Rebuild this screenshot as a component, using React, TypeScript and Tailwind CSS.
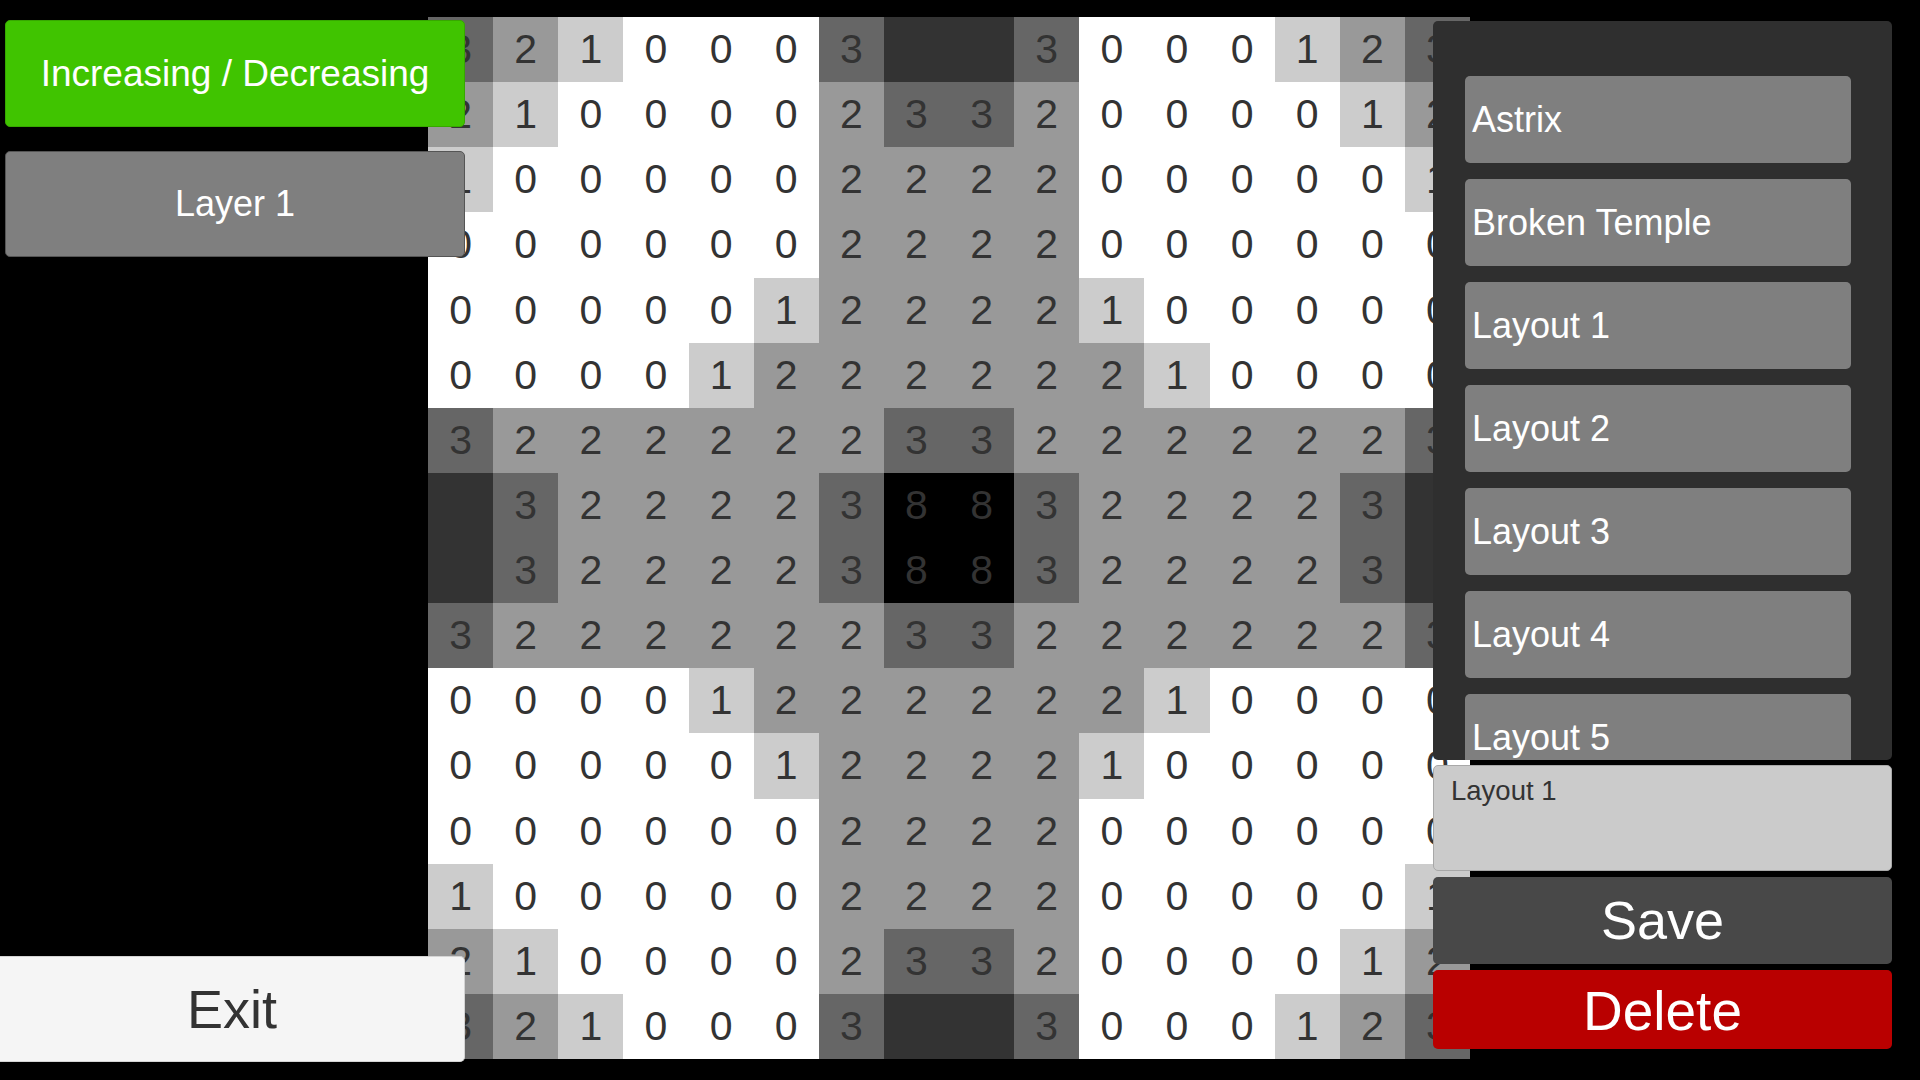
const board: number[][] = [
  [3, 2, 1, 0, 0, 0, 3, 4, 4, 3, 0, 0, 0, 1, 2, 3],
  [2, 1, 0, 0, 0, 0, 2, 3, 3, 2, 0, 0, 0, 0, 1, 2],
  [1, 0, 0, 0, 0, 0, 2, 2, 2, 2, 0, 0, 0, 0, 0, 1],
  [0, 0, 0, 0, 0, 0, 2, 2, 2, 2, 0, 0, 0, 0, 0, 0],
  [0, 0, 0, 0, 0, 1, 2, 2, 2, 2, 1, 0, 0, 0, 0, 0],
  [0, 0, 0, 0, 1, 2, 2, 2, 2, 2, 2, 1, 0, 0, 0, 0],
  [3, 2, 2, 2, 2, 2, 2, 3, 3, 2, 2, 2, 2, 2, 2, 3],
  [4, 3, 2, 2, 2, 2, 3, 8, 8, 3, 2, 2, 2, 2, 3, 4],
  [4, 3, 2, 2, 2, 2, 3, 8, 8, 3, 2, 2, 2, 2, 3, 4],
  [3, 2, 2, 2, 2, 2, 2, 3, 3, 2, 2, 2, 2, 2, 2, 3],
  [0, 0, 0, 0, 1, 2, 2, 2, 2, 2, 2, 1, 0, 0, 0, 0],
  [0, 0, 0, 0, 0, 1, 2, 2, 2, 2, 1, 0, 0, 0, 0, 0],
  [0, 0, 0, 0, 0, 0, 2, 2, 2, 2, 0, 0, 0, 0, 0, 0],
  [1, 0, 0, 0, 0, 0, 2, 2, 2, 2, 0, 0, 0, 0, 0, 1],
  [2, 1, 0, 0, 0, 0, 2, 3, 3, 2, 0, 0, 0, 0, 1, 2],
  [3, 2, 1, 0, 0, 0, 3, 4, 4, 3, 0, 0, 0, 1, 2, 3],
];

const shade: Record<number, string> = {
  0: 'bg-white',
  1: 'bg-[#cccccc]',
  2: 'bg-[#999999]',
  3: 'bg-[#666666]',
  4: 'bg-[#333333]',
  8: 'bg-black',
};

const layouts = ['Astrix', 'Broken Temple', 'Layout 1', 'Layout 2', 'Layout 3', 'Layout 4', 'Layout 5'];

function Board() {
  return (
    <div className="grid h-[1042px] w-[1042px] grid-cols-16 grid-rows-16">
      {board.flat().map((v, i) => (
        <div key={i} className={`flex items-center justify-center text-[41px] leading-none text-[#333333] ${shade[v]}`}>
          {v}
        </div>
      ))}
    </div>
  );
}

export default function App() {
  return (
    <div className="relative h-[1080px] w-[1920px] overflow-hidden bg-black font-['Liberation_Sans',Arial,sans-serif]">
      <div className="pl-[428px] pt-[17px]">
        <Board />
      </div>

      {/* left controls */}
      <div className="absolute bottom-[18px] left-0 top-[20px] flex w-[465px] flex-col justify-between">
        <div className="ml-[5px] flex flex-col gap-[24px]">
          <button className="h-[107px] rounded-[5px] border border-[#37a800] bg-[#40c400] text-[37px] text-white">
            Increasing / Decreasing
          </button>
          <button className="h-[106px] rounded-[5px] border border-[#555555] bg-[#7f7f7f] text-[36px] text-white">
            Layer 1
          </button>
        </div>
        <button className="h-[106px] rounded-r-[5px] border border-l-0 border-[#d4d4d4] bg-[#f5f5f5] text-[54px] text-[#333333]">
          Exit
        </button>
      </div>

      {/* right panel */}
      <div className="absolute left-[1433px] top-[21px] flex w-[459px] flex-col">
        <div className="flex h-[739px] flex-col gap-[16px] overflow-hidden rounded-[5px] bg-[#2f2f2f] pl-[32px] pr-[41px] pt-[55px]">
          {layouts.map((name) => (
            <div key={name} className="flex h-[87px] shrink-0 items-center rounded-[5px] bg-[#7f7f7f] pl-[7px] text-[36px] text-white">
              {name}
            </div>
          ))}
        </div>
        <div className="mt-[5px] h-[106px] rounded-[5px] border border-[#a8a8a8] bg-[#cbcbcb] pl-[17px] pt-[4px] text-[27.5px] text-[#333333]">
          Layout 1
        </div>
        <button className="mt-[6px] h-[87px] rounded-[5px] bg-[#484848] text-[54px] text-white">Save</button>
        <button className="mt-[6px] h-[79px] rounded-[5px] bg-[#b90000] text-[55px] text-white">Delete</button>
      </div>
    </div>
  );
}
